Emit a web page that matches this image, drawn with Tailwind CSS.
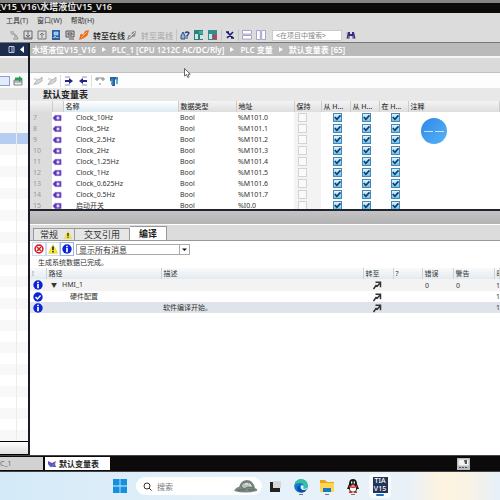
<!DOCTYPE html>
<html lang="zh-CN">
  <head>
    <meta charset="UTF-8" />
    <meta name="viewport" content="width=device-width, initial-scale=1.0" />
    <title>水塔液位V15_V16</title>
    <script src="https://cdn.jsdelivr.net/npm/@tailwindcss/browser@4"></script>
  </head>
  <body class="h-screen flex flex-col overflow-hidden bg-white font-['Noto_Sans','Noto_Sans_CJK_SC',sans-serif] text-[7px] leading-[11px] text-[#333] whitespace-nowrap">
    <!-- Shared icons -->
    <svg class="hidden">
      <symbol id="tag" viewBox="0 0 10 8">
        <path d="M1 4 3 1.4h6v5.2H3z" fill="#5a35b0" stroke="#7d5cc8" stroke-width=".8" />
        <rect x="4.6" y="2.6" width="2.8" height="2.8" fill="#e4dcff" />
      </symbol>
      <symbol id="tick" viewBox="0 0 10 10">
        <path d="M2 4.5 4.3 7 8.3 2.6" fill="none" stroke="#123a70" stroke-width="1.8" />
      </symbol>
      <symbol id="info" viewBox="0 0 10 10">
        <circle cx="5" cy="5" r="4.7" fill="#0b22d8" />
        <path d="M5 1.8v1.4M5 4.1v4.1" stroke="#fff" stroke-width="1.7" />
      </symbol>
      <symbol id="ok" viewBox="0 0 10 10">
        <circle cx="5" cy="5" r="4.7" fill="#0b22d8" />
        <path d="M2.5 5 4.4 7 7.6 3.4" fill="none" stroke="#fff" stroke-width="1.5" />
      </symbol>
      <symbol id="warn" viewBox="0 0 10 10">
        <path d="M5 .6 9.4 9.2H.6z" fill="#ffee33" stroke="#e0cf20" stroke-width=".8" />
        <path d="M5 2.6v3.6M5 7v1.5" stroke="#222" stroke-width="1.6" />
      </symbol>
      <symbol id="goto" viewBox="0 0 10 10">
        <path d="M1.500 9 4 5.500l1.200.700L8 3M3.500 2.300h5v5" fill="none" stroke="#333" stroke-width="1.500" />
      </symbol>
      <symbol id="key" viewBox="0 0 10 10">
        <path d="M1 8.5 4 4l3-1 2-2v4L6 7 4 8z" fill="#d6d6d6" stroke="#aaa" stroke-width=".8" />
        <path d="M1 3h3" stroke="#bbb" />
      </symbol>
    </svg>

    <!-- Title bar -->
    <header class="h-[13px] shrink-0 border-t-3 border-[#858585] bg-[#0d0b0a]">
      <h1 class="w-28 flex justify-end text-[9px] leading-[7px] font-semibold text-[#e8e8e8]">水塔液位V15_V16\水塔液位V15_V16</h1>
    </header>

    <!-- Menu -->
    <nav class="h-[15px] shrink-0 flex items-center gap-[9px] px-[6px] bg-[#dcdcdc]">
      <button>工具(T)</button>
      <button>窗口(W)</button>
      <button>帮助(H)</button>
    </nav>

    <!-- Main toolbar -->
    <div class="h-[15px] shrink-0 flex items-center gap-1 pl-[9px] bg-[#dcdcdc] border-b border-[#777]">
      <button aria-label="编译"><svg class="size-[10px]" viewBox="0 0 10 10"><path d="M1 2h4M2 4h4v4M7 5l2 4M4 9h5" fill="none" stroke="#8a8a8a" /></svg></button>
      <button aria-label="下载"><svg class="size-[10px]" viewBox="0 0 10 10"><path d="M1 1h8v8H1zM5 1v6M3 5l2 2 2-2M1 8h8" fill="none" stroke="#666" /></svg></button>
      <button aria-label="上传"><svg class="size-[10px]" viewBox="0 0 10 10"><path d="M1 1h8v8H1zM5 3v5M3 5l2-2 2 2" fill="none" stroke="#777" /></svg></button>
      <button aria-label="仿真"><svg class="size-[10px]" viewBox="0 0 10 10"><path d="M1 0h8v10H1z" fill="#2b5f9e" /><path d="M3 2h4v3H3zM2 8l2-2 2 2 2-1" fill="#8ec3ee" stroke="#bfe0f8" stroke-width=".6" /></svg></button>
      <button aria-label="运行"><svg class="size-[10px]" viewBox="0 0 10 10"><path d="M1 1h8v6H1zM3 3h4v2H3zM4 9h5" fill="#ccc" stroke="#555" /></svg></button>
      <button class="flex items-center gap-1 text-[8px] font-medium text-[#222]">
        <svg class="size-[10px]" viewBox="0 0 10 10"><path d="M0 10 1.500 4l3 .500L6 1l4-1-1.500 5.500L5 8l-2 1z" fill="#f06a1c" /><path d="m2 8 6-6" stroke="#ffb36b" /></svg>转至在线
      </button>
      <button class="-ml-[2px] flex items-center gap-1 text-[8px] text-[#a5a5a5]">
        <svg class="size-[10px]" viewBox="0 0 10 10"><path d="M0 10 1.500 5l3 .500L5 2l4-1-1 5.500L5 7l-2 2z" fill="#8c8c8c" /><path d="m2 8 6-6" stroke="#ddd" /></svg>转至离线
      </button>
      <span class="-mx-px w-px h-3 bg-[#c4c4c4]"></span>
      <button aria-label="可访问设备"><svg class="size-[10px]" viewBox="0 0 10 10"><path d="M1 9V6l2-4 2 4v3zM7 9V5" fill="#9cb4d4" stroke="#2a4a80" /><path d="M5 3q2-2 4 0L7 6" fill="none" stroke="#223c90" stroke-width="1.3" /></svg></button>
      <button aria-label="启动CPU"><svg class="size-[10px]" viewBox="0 0 10 10"><path d="M0 0h9v10H0z" fill="#2d7f80" /><path d="M1 4h3v5H1zM6 5h3v4H6z" fill="#cfe6df" /><path d="M5 1h4v3H5z" fill="#39b58b" /></svg></button>
      <button aria-label="停止CPU"><svg class="size-[10px]" viewBox="0 0 10 10"><path d="M0 0h9v10H0z" fill="#2d8f90" /><path d="M1 4h3v5H1z" fill="#cfe6df" /><path d="M5 5h4v4H5z" fill="#e0304e" /></svg></button>
      <span class="-mx-px w-px h-3 bg-[#c4c4c4]"></span>
      <button aria-label="交叉引用"><svg class="size-[10px]" viewBox="0 0 10 10"><path d="m2 2 6 6M8 2 2 8M1 2h3M6 8h3" stroke="#1d1b70" stroke-width="1.6" /></svg></button>
      <span class="-mx-px w-px h-3 bg-[#c4c4c4]"></span>
      <button aria-label="水平拆分"><svg class="size-[10px]" viewBox="0 0 10 10"><path d="M.5.5h9v3.6h-9zM.5 5.5h9v3.6h-9z" fill="#fff" stroke="#a4a4cf" /></svg></button>
      <button aria-label="垂直拆分"><svg class="size-[10px]" viewBox="0 0 10 10"><path d="M.5.5h3.8v9H.5zM5.7.5h3.8v9H5.7z" fill="#fff" stroke="#a4a4cf" /></svg></button>
      <input type="text" aria-label="在项目中搜索" placeholder="<在项目中搜索>" class="ml-[2px] w-[70px] h-[11px] px-[3px] bg-white border border-[#ccc] text-[7px] leading-[9px] placeholder-[#888]" />
      <button aria-label="搜索"><svg class="size-[10px]" viewBox="0 0 10 10"><path d="M2 2h2v2h2V2h2l1.500 6.500h-3V6h-3v2.500h-3z" fill="#35307c" /><path d="m0 4 2-2M2 7h1M7 7h1" stroke="#a9a2e4" /></svg></button>
    </div>

    <div class="flex-1 min-h-0 flex">
      <!-- Project tree, mostly collapsed -->
      <aside class="w-7 shrink-0 flex flex-col bg-white">
        <div class="h-[13px] shrink-0 flex items-center justify-end gap-[5px] pr-1 bg-[#1c2c4e]">
          <svg class="size-[7px]" viewBox="0 0 7 7"><path d="M1 .5h5v6H1zM4 1v5" fill="none" stroke="#bcc8de" /></svg>
          <svg class="w-1 h-[7px]" viewBox="0 0 4 7"><path d="M4 0v7L0 3.500z" fill="#fff" /></svg>
        </div>
        <div class="h-[17px] shrink-0 bg-[#dadada] border-t-2 border-[#f6f6f6]"></div>
        <div class="h-[15px] shrink-0 flex items-center gap-[3px] bg-[#fafafa]">
          <span class="w-[10px] h-[10px] bg-[#e3ebfb] border border-l-0 border-[#8c9ed4]"></span>
          <svg class="size-[10px]" viewBox="0 0 10 10"><path d="M1 4h8v5H1zM1 6h8" fill="#eef" stroke="#666" stroke-width=".8" /><path d="M2 1.500h4V0l4 3-4 3V4.500H2z" fill="#2b9a55" /></svg>
        </div>
        <div class="h-3 shrink-0 bg-[#e4e4e4]"></div>
        <div id="tree" class="flex-1 min-h-0 overflow-hidden"></div>
        <div class="h-[14px] shrink-0 border-y border-black bg-linear-to-b from-white to-[#dedede]"></div>
      </aside>

      <main class="flex-1 min-w-0 flex flex-col border-l-2 border-[#191c28]">
        <!-- Breadcrumb -->
        <div class="h-[13px] shrink-0 flex items-center gap-[6px] pl-[2px] bg-[#bababa] text-[8px] font-semibold text-white">
          <span>水塔液位V15_V16</span><svg class="w-1 h-[5px]" viewBox="0 0 4 5"><path d="M0 0v5l4-2.500z" fill="#fff" /></svg>
          <span>PLC_1 [CPU 1212C AC/DC/Rly]</span><svg class="w-1 h-[5px]" viewBox="0 0 4 5"><path d="M0 0v5l4-2.500z" fill="#fff" /></svg>
          <span>PLC 变量</span><svg class="w-1 h-[5px]" viewBox="0 0 4 5"><path d="M0 0v5l4-2.500z" fill="#fff" /></svg>
          <span>默认变量表 [65]</span>
        </div>
        <div class="h-[17px] shrink-0 bg-[#dadada] border-t-2 border-t-[#f6f6f6] border-b border-b-[#c2c2c2]"></div>

        <!-- Tag table toolbar -->
        <div class="h-[15px] shrink-0 flex items-center gap-1 pl-[3px] bg-[#fdfdfd]">
          <button aria-label="插入行"><svg class="size-[10px]"><use href="#key" /></svg></button>
          <button aria-label="添加行"><svg class="size-[10px]"><use href="#key" /></svg></button>
          <span class="-mx-px w-px h-3 bg-[#ddd]"></span>
          <button aria-label="导出"><svg class="size-[10px]" viewBox="0 0 10 10"><path d="M1 1h5M1 9h5" stroke="#8f97c4" /><path d="M1 4h4V2l4 3-4 3V6H1z" fill="#23277c" /></svg></button>
          <button aria-label="导入"><svg class="size-[10px]" viewBox="0 0 10 10"><path d="M4 1h5M4 9h5" stroke="#8f97c4" /><path d="M9 4H5V2L1 5l4 3V6h4z" fill="#23277c" /></svg></button>
          <span class="-mx-px w-px h-3 bg-[#ddd]"></span>
          <button aria-label="全部监视"><svg class="size-[10px]" viewBox="0 0 10 10"><path d="M1 2h2v2H1zM7 2h2v2H7zM3 2h4M4 8h2" fill="none" stroke="#888" /></svg></button>
          <button aria-label="保持性"><svg class="size-[10px]" viewBox="0 0 10 10"><path d="M1 1h8v2.500H6V10H3V5H1z" fill="#2f5fa8" /><path d="M3 3v6M8 1v7" stroke="#35a3b8" stroke-width="1.600" /></svg></button>
        </div>

        <h2 class="h-[13px] shrink-0 pl-[13px] bg-[#e8e8e8] text-[9px] leading-[13px] font-bold text-[#222]">默认变量表</h2>

        <div class="relative h-[108px] shrink-0 overflow-hidden">
          <table class="w-full table-fixed border-collapse">
            <colgroup>
              <col class="w-[22px]" /><col class="w-[11px]" /><col class="w-[115px]" /><col class="w-[58px]" /><col class="w-[58px]" />
              <col class="w-[27px]" /><col class="w-[29px]" /><col class="w-[29px]" /><col class="w-[29px]" /><col />
            </colgroup>
            <thead>
              <tr class="h-[11px] bg-linear-to-b from-[#f4f4f4] to-[#dedede] text-left [&>th]:p-0 [&>th]:pl-[2px] [&>th]:font-medium [&>th]:border-r [&>th]:border-[#ccc] [&>th]:overflow-hidden">
                <th></th><th></th><th class="bg-linear-to-b from-white to-[#dceaf2]">名称</th><th>数据类型</th><th>地址</th><th>保持</th><th>从 H...</th><th>从 H...</th><th>在 H...</th><th>注释</th>
              </tr>
            </thead>
            <tbody id="tags"></tbody>
          </table>
          <!-- Floating ball -->
          <div class="absolute left-[391px] top-[17px] size-[26px] rounded-full bg-linear-to-br from-[#2f86e6] to-[#58b4f8] flex items-center justify-center gap-[2px]">
            <span class="w-[9px] h-px bg-white/70"></span><span class="w-[9px] h-px bg-white/70"></span>
          </div>
        </div>

        <div class="h-4 shrink-0 border-t-2 border-t-[#20242e] border-b border-b-white bg-linear-to-b from-[#c4c4c4] to-[#b2b2b2]"></div>

        <!-- Inspector tabs -->
        <div class="h-4 shrink-0 flex items-end pl-[3px] bg-[#dcdcdc] border-b border-[#999] text-[9px] leading-[12px]">
          <button class="w-[42px] h-3 flex items-center justify-between pl-[6px] pr-[2px] bg-[#e6e6e6] border border-b-0 border-[#999]">常规
            <svg class="size-[8px]"><use href="#warn" /></svg>
          </button>
          <button class="w-[55px] h-3 bg-[#e6e6e6] border border-b-0 border-l-0 border-[#999] leading-[10px]">交叉引用</button>
          <button class="w-[37px] h-[14px] bg-white border border-b-0 border-l-0 border-[#999] font-bold text-[#222]">编译</button>
        </div>

        <!-- Message filter -->
        <div class="h-4 shrink-0 flex items-center pl-[2px] bg-white">
          <button aria-label="错误" class="size-[14px] p-px border border-[#cdd8ea]"><svg class="size-[10px]" viewBox="0 0 10 10"><circle cx="5" cy="5" r="3.900" fill="#fff" stroke="#d8202c" stroke-width="1.600" /><path d="m3 3 4 4M7 3 3 7" stroke="#d8202c" stroke-width="1.500" /></svg></button>
          <button aria-label="警告" class="size-[14px] p-px border border-[#cdd8ea]"><svg class="size-[10px]"><use href="#warn" /></svg></button>
          <button aria-label="信息" class="size-[14px] p-px border border-[#9db4dc]"><svg class="size-[10px]"><use href="#info" /></svg></button>
          <div class="ml-[2px] w-[114px] h-[11px] grid grid-cols-[1fr_10px] border border-[#aaa]">
            <select aria-label="消息过滤" class="col-span-2 col-start-1 row-start-1 appearance-none pl-[2px] text-[8px] leading-[9px] h-[9px]">
              <option>显示所有消息</option>
            </select>
            <svg class="col-start-2 row-start-1 w-[10px] h-[9px] pointer-events-none" viewBox="0 0 10 9"><path d="M.5 0v9" stroke="#aaa" /><path d="M3 3.500h5L5.500 6z" fill="#111" /></svg>
          </div>
        </div>
        <p class="h-[11px] shrink-0 pl-2">生成系统数据已完成。</p>

        <!-- Compile messages -->
        <table class="w-full table-fixed border-collapse">
          <colgroup>
            <col class="w-4" /><col class="w-[115px]" /><col class="w-[202px]" /><col class="w-[30px]" /><col class="w-[29px]" /><col class="w-[31px]" /><col class="w-[41px]" /><col />
          </colgroup>
          <thead>
            <tr class="h-[11px] bg-linear-to-b from-[#fafafa] to-[#e2ebf1] text-left [&>th]:p-0 [&>th]:pl-[2px] [&>th]:font-normal [&>th]:border-r [&>th]:border-[#ccd4da] [&>th]:overflow-hidden">
              <th class="text-[#888]">!</th><th>路径</th><th>描述</th><th>转至</th><th>?</th><th>错误</th><th>警告</th><th>时间</th>
            </tr>
          </thead>
          <tbody id="messages"></tbody>
        </table>
      </main>
    </div>

    <!-- Editor bar -->
    <div class="h-[17px] shrink-0 flex items-center bg-[#0c0a0a] border-y border-[#444] text-[8px]">
      <button class="w-[43px] h-[13px] bg-[#d2d2d2] text-left text-[7px] text-[#666]">C_1</button>
      <button class="ml-[2px] w-[65px] h-[13px] flex items-center gap-[3px] pl-[3px] bg-white font-bold text-[#222]">
        <svg class="size-2" viewBox="0 0 8 8"><path d="m0 1 4 2 4-2-1 3 1 3H2L0 4z" fill="#6a4bc0" /><path d="m1 5 3 2 2-3" fill="none" stroke="#38a0c8" /></svg>默认变量表
      </button>
      <svg class="ml-auto mr-[30px] w-[13px] h-3" viewBox="0 0 13 12"><path d="M0 0h13v12H0z" fill="#b9b9c0" /><path d="M1.500 1.500h10v6h-10z" fill="#f4f4f6" /><path d="M7 2h3v4H8z" fill="#555" /><path d="M2 9.500h9" stroke="#555" stroke-dasharray="2 1" /></svg>
    </div>

    <!-- Taskbar -->
    <footer class="h-[28px] shrink-0 flex items-center justify-center gap-[9px] pl-1 bg-[linear-gradient(to_right,#d4eaf8,#e6f1f9_50%,#e9f1f8_82%,#fdf3df_88%,#faf3e4_93%,#e6f0f8)]">
      <button aria-label="开始"><svg class="size-[14px]" viewBox="0 0 14 14"><path d="M0 0h6.600v6.600H0zM7.400 0H14v6.600H7.400zM0 7.400h6.600V14H0zM7.400 7.400H14V14H7.400z" fill="#1390e2" /></svg></button>
      <label class="w-[126px] h-[18px] flex items-center gap-[5px] pl-[7px] pr-1 rounded-full bg-white">
        <svg class="size-[9px] shrink-0" viewBox="0 0 9 9"><circle cx="4" cy="4" r="3" fill="none" stroke="#333" /><path d="m6 6 2.600 2.600" stroke="#333" /></svg>
        <input type="text" aria-label="搜索" placeholder="搜索" class="min-w-0 flex-1 text-[8px] placeholder-[#777]" />
        <svg class="w-6 h-[14px] shrink-0" viewBox="0 0 24 14"><path d="M0 12Q2 8 5 8 7 1 13 1t8 8q3 1 2 3-12 3-23 0z" fill="#7c8a83" /><path d="M7 7q1-4 6-4t6 6l-5-1-4 2zM3 11h8M14 11h7" fill="#b7c2b9" stroke="#4f5d58" stroke-width=".700" /><path d="M11 5h3M15 6h2" stroke="#f0f3ee" /></svg>
      </label>
      <div class="-ml-[6px] flex items-center gap-[6px]">
        <button aria-label="任务视图" class="w-5 flex justify-center"><svg class="w-3 h-[11px]" viewBox="0 0 12 11"><path d="M1 1h6v10H1zM5 6h6v5H5z" fill="#222" /><path d="M4 0h8v7H4z" fill="#d8d8d8" /></svg></button>
        <button aria-label="Edge" class="w-5 flex flex-col items-center gap-px pt-[2px]">
          <svg class="size-[14px]" viewBox="0 0 14 14"><circle cx="7" cy="7" r="6.800" fill="#1479cf" /><path d="M.500 6Q2 0 7.500.200 13.500.800 13.800 6.500 13 10 9 9q2-4-2-5Q3 3.500.500 6z" fill="#34c1a0" /><path d="M6 6q-2 5 6 5.500Q8 15 4 12 1.500 8 6 6z" fill="#0c4fa8" /><path d="M7 6.500q4-1 2 2.800 2 1 4.500-.800-1 3-4.500 2.500Q6 10 7 6.500z" fill="#e8f6fb" /></svg>
          <span class="w-1 h-px bg-[#777]"></span>
        </button>
        <button aria-label="文件资源管理器" class="w-5 flex flex-col items-center gap-px pt-[2px]">
          <svg class="size-[14px]" viewBox="0 0 14 14"><path d="M0 1h5l2 2h7v10H0z" fill="#e9a51c" /><path d="M0 4h14v9H0z" fill="#ffd651" /><path d="M3 9h8v4H3z" fill="#1878c8" /></svg>
          <span class="w-1 h-px bg-[#777]"></span>
        </button>
        <button aria-label="QQ" class="w-5 flex flex-col items-center gap-px pt-[2px]">
          <svg class="size-[14px]" viewBox="0 0 14 14"><path d="M7 0q4 0 4 5l2 5-2 0-1 3H4l-1-3-2 0 2-5q0-5 4-5z" fill="#1a1a1a" /><ellipse cx="7" cy="9.500" rx="3" ry="3.300" fill="#fff" /><path d="M3 6.500q4 2 8 0v1.800q-4 1.500-8 0z" fill="#e02828" /><path d="M5 2.500h1.300v2H5zM7.700 2.500H9v2H7.700z" fill="#fff" /><path d="M5 5.300h4L7 6.500zM3 12.500h3.500V14H3zM7.500 12.500H11V14H7.500z" fill="#e0301c" /></svg>
          <span class="w-1 h-px bg-[#777]"></span>
        </button>
        <button aria-label="TIA V15" class="w-[22px] h-6 flex flex-col items-center gap-px pt-[3px] rounded-sm bg-white/70">
          <span class="w-[15px] h-4 flex flex-col items-center bg-[#25345a] text-white text-[7px] leading-[8px] font-medium"><span>TIA</span><span>V15</span></span>
          <span class="w-2 h-[2px] shrink-0 rounded-full bg-[#1d6fc4]"></span>
        </button>
      </div>
    </footer>

    <!-- Mouse pointer -->
    <svg class="absolute left-[184px] top-[68px] w-[7px] h-[10px]" viewBox="0 0 7 10"><path d="M.500.500v7.500L2.500 6.500l1.300 3 1.400-.600L4 6.200h2.300z" fill="#fff" stroke="#444" stroke-width=".800" /></svg>

    <script>
      const tags = [
        ["Clock_10Hz", "%M101.0"],
        ["Clock_5Hz", "%M101.1"],
        ["Clock_2.5Hz", "%M101.2"],
        ["Clock_2Hz", "%M101.3"],
        ["Clock_1.25Hz", "%M101.4"],
        ["Clock_1Hz", "%M101.5"],
        ["Clock_0.625Hz", "%M101.6"],
        ["Clock_0.5Hz", "%M101.7"],
        ["启动开关", "%I0.0"],
      ];

      const checkbox = (label) => `
        <td class="p-0"><label class="w-[9px] h-[9px] ml-3 grid">
          <input type="checkbox" checked aria-label="${label}" class="[grid-area:1/1] appearance-none size-[9px] border border-[#4a86b4] bg-linear-to-b from-[#e2f5fd] to-[#5fc6ec]" />
          <svg class="[grid-area:1/1] size-[9px] pointer-events-none"><use href="#tick" /></svg>
        </label></td>`;

      document.getElementById("tags").innerHTML = tags
        .map(([name, address], i) => `
          <tr class="h-[11px]">
            <td class="p-0 pl-[3px] bg-[#dcdcdc] text-[#999]">${i + 7}</td>
            <td class="p-0"><svg class="w-[10px] h-2"><use href="#tag" /></svg></td>
            <td class="p-0 pl-[13px]">${name}</td>
            <td class="p-0 pl-[2px]">Bool</td>
            <td class="p-0 pl-[2px]">${address}</td>
            <td class="p-0 bg-[#f3f3f3]"><input type="checkbox" aria-label="保持 ${name}" class="block ml-1 appearance-none size-[9px] border border-[#d4d4d4] bg-[#fafafa]" /></td>
            ${checkbox("从 HMI 可访问 " + name)}${checkbox("从 HMI 可写 " + name)}${checkbox("在 HMI 可见 " + name)}
            <td class="p-0"></td>
          </tr>`)
        .join("");

      const messages = [
        { icon: "info", path: '<span class="inline-block w-[11px] ml-[3px] text-[6px]">▼</span>HMI_1', text: "", count: "0", row: "bg-[#f3f3f3]" },
        { icon: "ok", path: '<span class="ml-[22px]">硬件配置</span>', text: "", count: "", row: "bg-white" },
        { icon: "info", path: "", text: "软件编译开始。", count: "", row: "bg-[#dfe4ea]" },
      ];

      document.getElementById("messages").innerHTML = messages
        .map((m) => `
          <tr class="h-[11px] ${m.row}">
            <td class="p-0 pl-[3px]"><svg class="size-[10px]"><use href="#${m.icon}" /></svg></td>
            <td class="p-0 pl-[2px]">${m.path}</td>
            <td class="p-0 pl-[2px]">${m.text}</td>
            <td class="p-0 pl-[9px]"><svg class="size-[10px]"><use href="#goto" /></svg></td>
            <td class="p-0"></td>
            <td class="p-0 pl-[3px]">${m.count}</td>
            <td class="p-0 pl-[3px]">${m.count}</td>
            <td class="p-0 pl-[2px] overflow-hidden">15:20</td>
          </tr>`)
        .join("");

      // Only the fourth tree row is selected
      document.getElementById("tree").innerHTML = Array.from({ length: 31 }, (_, i) => `
        <div class="h-[11px] flex ${i === 3 ? "bg-[#b5cdf0]" : i % 2 ? "bg-white" : "bg-[#f8f8f8]"}">
          <span class="w-[17px] border-r border-[#ececec]"></span>
        </div>`).join("");
    </script>
  </body>
</html>
